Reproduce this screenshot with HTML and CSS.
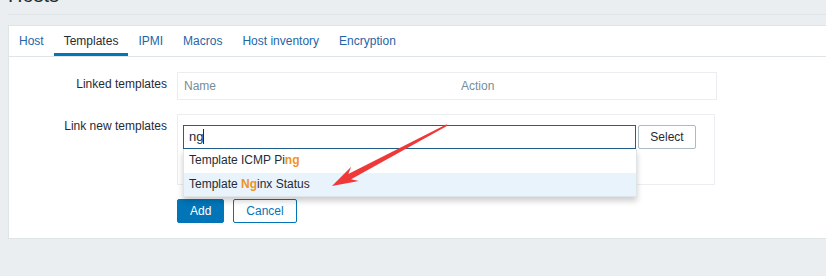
FILE: index.html
```html
<!DOCTYPE html>
<html>
<head>
<title>Hosts</title>
<link rel="stylesheet" href="styles.css">
</head>
<body>

<div class="page">
  <div class="header">
    <h1>Hosts</h1>
  </div>

  <div class="panel">
    <ul class="tabs">
      <li><a href="#">Host</a></li>
      <li class="active"><a href="#">Templates</a></li>
      <li><a href="#">IPMI</a></li>
      <li><a href="#">Macros</a></li>
      <li><a href="#">Host inventory</a></li>
      <li><a href="#">Encryption</a></li>
    </ul>

    <div class="form">
      <div class="form-row">
        <label class="form-label">Linked templates</label>
        <div class="form-field">
          <div class="box">
            <table class="list">
              <tr>
                <th class="col-name">Name</th>
                <th>Action</th>
              </tr>
            </table>
          </div>
        </div>
      </div>

      <div class="form-row">
        <label class="form-label">Link new templates</label>
        <div class="form-field">
          <div class="box box-new">
            <div class="search">
              <div class="search-input">
                <div class="input">ng<span class="caret"></span></div>
                <ul class="suggest">
                  <li>Template ICMP Pi<b>ng</b></li>
                  <li class="hover">Template <b>Ng</b>inx Status</li>
                </ul>
              </div>
              <button class="btn-grey">Select</button>
            </div>
          </div>
        </div>
      </div>

      <div class="form-row">
        <div class="form-label"></div>
        <div class="form-field buttons">
          <button class="btn-primary">Add</button>
          <button class="btn-alt">Cancel</button>
        </div>
      </div>
    </div>
  </div>
</div>

<svg class="arrow" width="826" height="276" viewBox="0 0 826 276">
  <polygon fill="#ef3838" points="446.6,124.3 348.3,174 351.2,166.7 332,186 358.8,180.9 351.1,179.2 447.4,125.7"/>
</svg>

</body>
</html>
```

FILE: styles.css
```css
body {
  font-family: "Liberation Sans", Arial, sans-serif;
  font-size: 12px;
  color: #1f2c33;
  background-color: #ebeef0;
  margin: 0;
  padding: 0;
  overflow: hidden;
}

.page {
  margin-left: 8px;
  margin-right: -20px;
}

.header {
  display: flow-root;
  height: 14px;
  border-bottom: 1px solid #dfe4e7;
  margin-bottom: 10px;
}

h1 {
  margin: -15px 0 0 0;
  font-size: 20px;
  line-height: 20px;
  font-weight: normal;
  color: #1f2c33;
}

.panel {
  background-color: #fff;
  border: 1px solid #dfe4e7;
}

.tabs {
  list-style: none;
  margin: 0;
  padding: 0;
  display: flex;
  border-bottom: 1px solid #dfe4e7;
}

.tabs li a {
  display: block;
  padding: 4px 10px 0;
  line-height: 23px;
  border-bottom: 3px solid transparent;
  color: #1f65a6;
  text-decoration: none;
}

.tabs li.active a {
  color: #1f2c33;
  border-bottom-color: #0275b8;
}

.form {
  padding: 15px 0 15px;
}

.form-row {
  display: flex;
  margin-bottom: 14px;
}

.form-row:last-child {
  margin-bottom: 0;
}

.form-label {
  width: 158px;
  margin-right: 10px;
  text-align: right;
  padding-top: 5px;
  line-height: 14px;
}

.box {
  width: 538px;
  border: 1px solid #ebeef0;
}

.list {
  width: 100%;
  border-collapse: collapse;
}

.list th {
  text-align: left;
  font-weight: normal;
  color: #768d99;
  padding: 0 6px;
  height: 26px;
}

.list th.col-name {
  width: 265px;
}

.box-new {
  height: 71px;
  padding: 10px 5px 0;
  box-sizing: border-box;
}

.search {
  display: flex;
  align-items: flex-start;
}

.search-input {
  position: relative;
  width: 453px;
}

.input {
  height: 22px;
  line-height: 22px;
  border: 1px solid #1f5f8b;
  padding: 0 5px;
  color: #1f2c33;
  font-size: 13px;
}

.caret {
  display: inline-block;
  width: 1px;
  height: 15px;
  background-color: #1f2c33;
  vertical-align: -3px;
}

.suggest {
  position: absolute;
  left: 0;
  top: 24px;
  width: 452px;
  margin: 0;
  padding: 0;
  list-style: none;
  background-color: #fff;
  border: 1px solid #dfe4e7;
  border-top: none;
  box-shadow: 0 4px 6px rgba(0, 0, 0, 0.2);
  z-index: 2;
}

.suggest li {
  height: 23.5px;
  line-height: 23.5px;
  padding: 0 5px;
  color: #1f2c33;
}

.suggest li.hover {
  background-color: #e9f3fc;
}

.suggest b {
  color: #ef931f;
}

button {
  font-family: "Liberation Sans", Arial, sans-serif;
  font-size: 12px;
  height: 24px;
  padding: 0 12px;
  border-radius: 2px;
  cursor: pointer;
}

.btn-grey {
  margin-left: 2px;
  background-color: #fff;
  border: 1px solid #acbbc2;
  color: #1f2c33;
  width: 58px;
  padding: 0;
}

.buttons {
  display: flex;
  gap: 9px;
}

.btn-primary {
  background-color: #0275b8;
  border: 1px solid #0275b8;
  color: #fff;
}

.btn-alt {
  background-color: #fff;
  border: 1px solid #0275b8;
  color: #0275b8;
}

.arrow {
  position: absolute;
  left: 0;
  top: 0;
  pointer-events: none;
  z-index: 5;
}
```
